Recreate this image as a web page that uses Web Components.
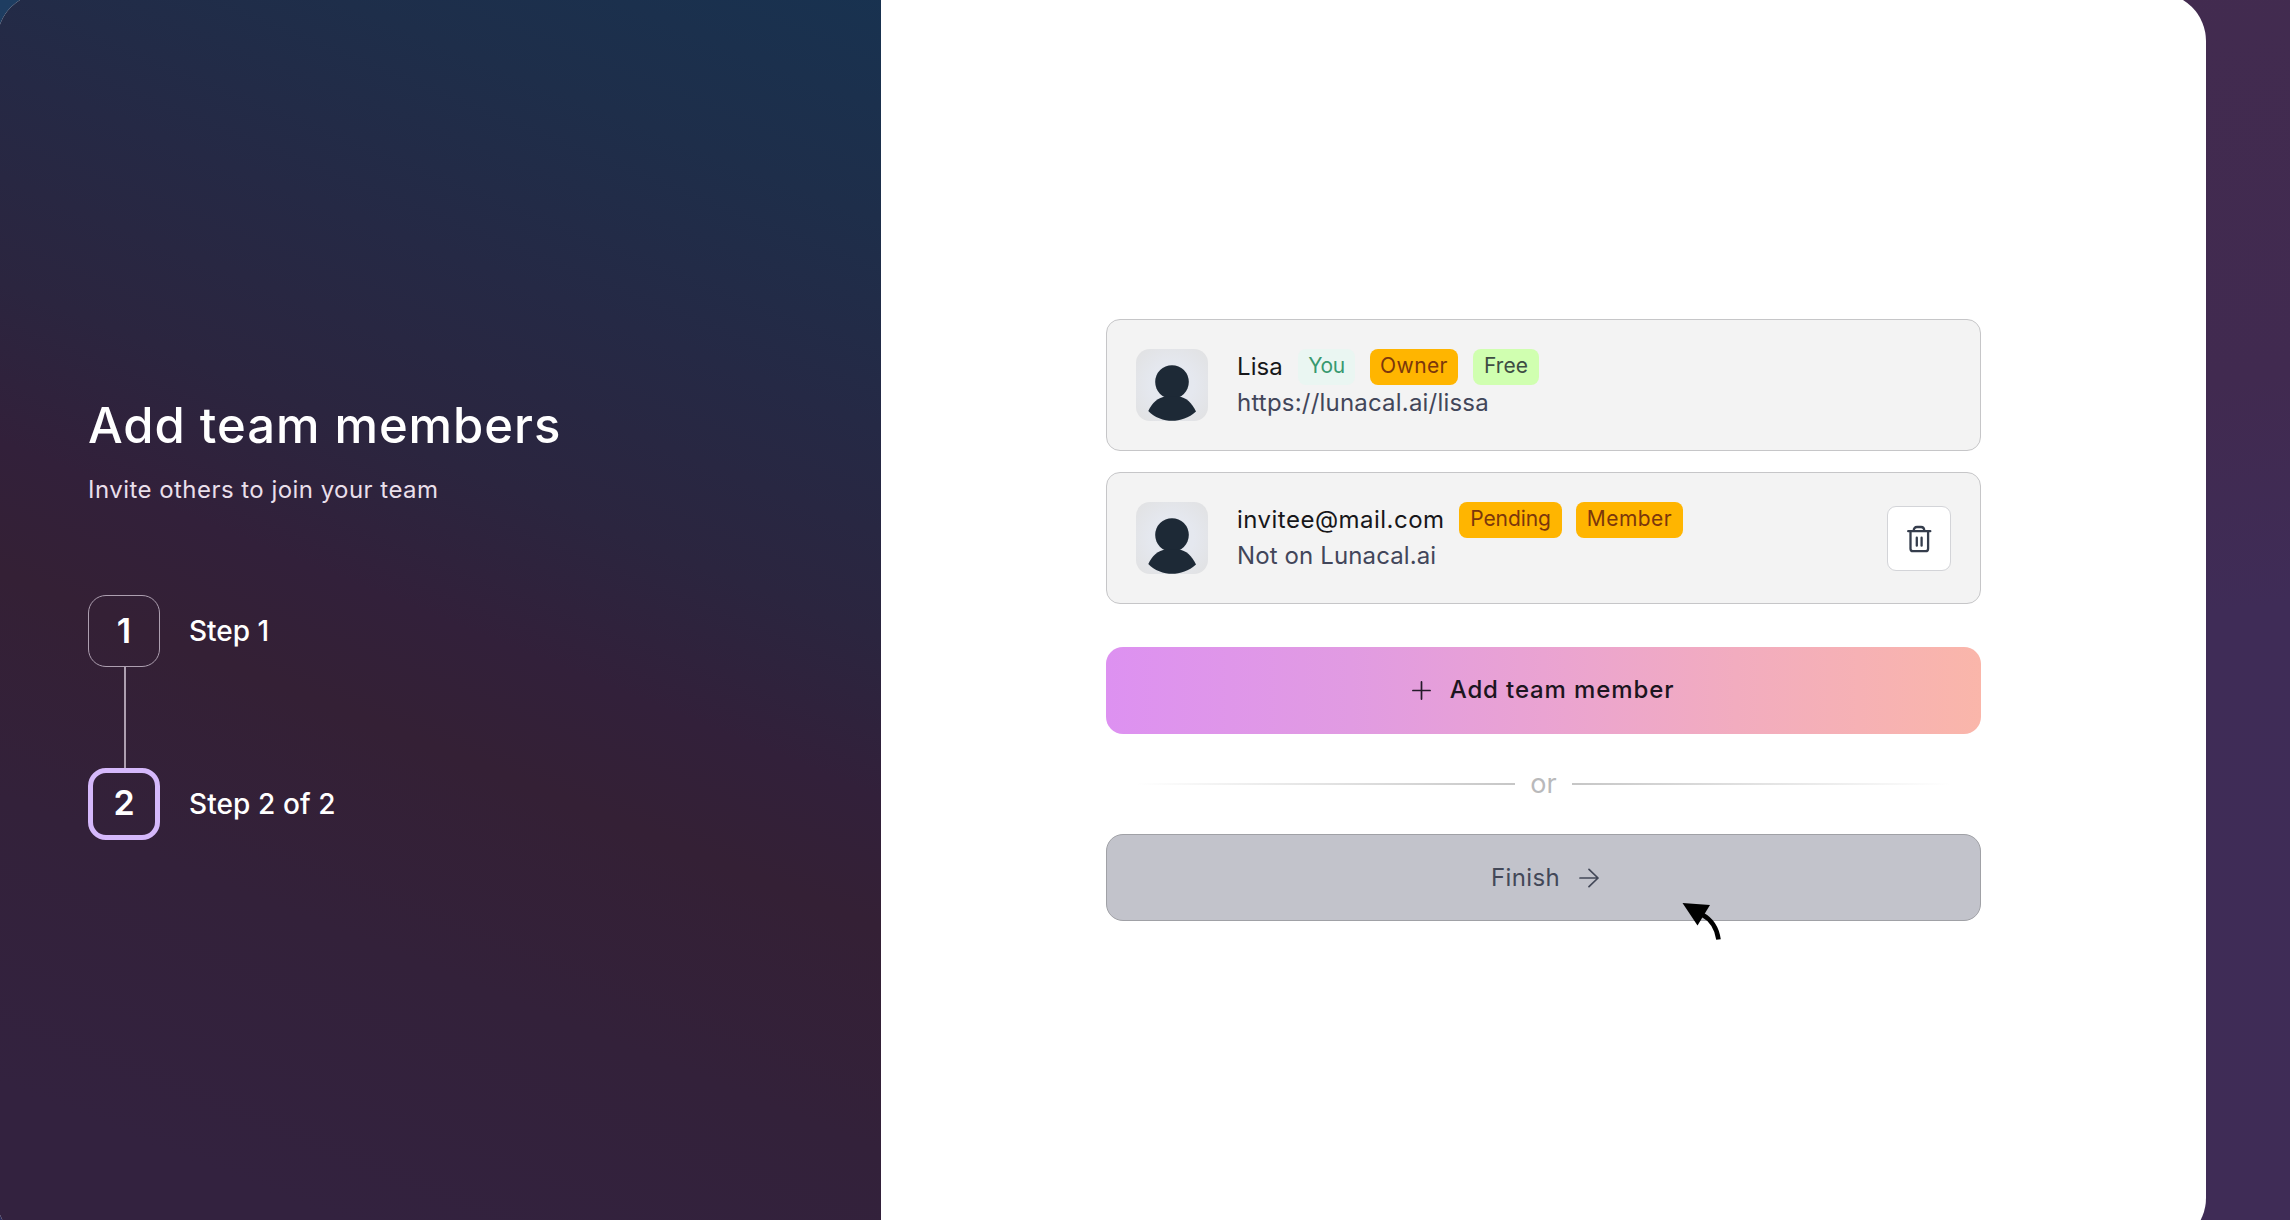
<!DOCTYPE html>
<html lang="en">
<head>
<meta charset="utf-8">
<title>Add team members</title>
<style>
html,body{margin:0;height:1220px;overflow:hidden}
body{font-family:Inter,"Liberation Sans",sans-serif;font-size:24px;
background:linear-gradient(90deg,#1e3d61 0,#1e3d61 40px,transparent 41px) 0 0/100% 600px no-repeat,linear-gradient(90deg,#2c2c5c 0,#2c2c5c 40px,transparent 41px) 0 600px/100% 620px no-repeat,linear-gradient(172deg,#432c4f 0%,#412a50 45%,#3f2c57 60%,#3f2c56 100%)}
</style>
</head>
<body>
<onboarding-shell>
  <side-panel slot="side" heading="Add team members" sub="Invite others to join your team">
    <step-item number="1">Step 1</step-item>
    <step-item number="2" active>Step 2 of 2</step-item>
  </side-panel>
  <member-card style="--name-w:46px;--name-ls:.1px;--detail-ls:.2px">
    <span slot="name">Lisa</span>
    <tag-badge slot="tags" kind="you" style="--w:57px;--ls:-.4px">You</tag-badge>
    <tag-badge slot="tags" style="--w:88px;--ls:.4px">Owner</tag-badge>
    <tag-badge slot="tags" kind="free" style="--w:66px">Free</tag-badge>
    <span slot="detail">https://lunacal.ai/lissa</span>
  </member-card>
  <member-card removable style="--name-w:207px;--name-ls:.48px;--detail-ls:.12px">
    <span slot="name">invitee@mail.com</span>
    <tag-badge slot="tags" style="--w:103px;--ls:-.1px">Pending</tag-badge>
    <tag-badge slot="tags" style="--w:107px;--ls:.45px;margin-left:-1px">Member</tag-badge>
    <span slot="detail">Not on Lunacal.ai</span>
  </member-card>
  <action-button kind="primary">Add team member</action-button>
  <or-divider>or</or-divider>
  <action-button kind="finish">Finish</action-button>
</onboarding-shell>
<script>
function define(name, html, setup) {
  customElements.define(name, class extends HTMLElement {
    constructor() {
      super();
      const root = this.attachShadow({ mode: 'open' });
      const t = document.createElement('template');
      t.innerHTML = html;
      root.append(t.content.cloneNode(true));
    }
    connectedCallback() { if (setup) setup(this, this.shadowRoot); }
  });
}

define('onboarding-shell', `<style>
:host{display:flex;box-sizing:border-box;width:2209px;height:1253px;margin:-7px 0 0 -3px;border-radius:48px;overflow:hidden;background:#fff}
.main{flex:1;display:flex;flex-direction:column;align-items:center}
.col{width:875px;padding-top:326px;display:flex;flex-direction:column}
</style><slot name="side"></slot><div class="main"><div class="col"><slot></slot></div></div>`);

define('side-panel', `<style>
:host{display:block;box-sizing:border-box;width:884px;height:1253px;padding:403px 0 0 91px;color:#fff;
background:linear-gradient(202deg,#183250 0%,#1e2e4a 14%,#252945 27%,#2b253f 40%,#32203a 50%,#342035 58%,#33213a 72%,#33223f 90%)}
h1{margin:0 0 16px;font-size:49px;line-height:60px;font-weight:450;letter-spacing:.95px;white-space:nowrap}
p{margin:0 0 87px;font-size:24px;line-height:36px;letter-spacing:.46px;color:#e9dfea}
.steps{display:flex;flex-direction:column}
</style><h1></h1><p></p><div class="steps"><slot></slot></div>`, (el, r) => {
  r.querySelector('h1').textContent = el.getAttribute('heading');
  r.querySelector('p').textContent = el.getAttribute('sub');
});

define('step-item', `<style>
:host{display:grid;grid-template-columns:72px auto;column-gap:29px;justify-content:start;align-items:center}
.box{box-sizing:border-box;width:72px;height:72px;border:1px solid #ad9fb0;border-radius:18px;display:flex;align-items:center;justify-content:center;font-size:34px;font-weight:600;padding-bottom:1px}
.label{font-size:28px;line-height:40px;font-weight:500;padding-bottom:1px;letter-spacing:0}
.line{width:2px;height:101px;margin-left:36px;background:#ad9fb0}
:host([active]) .box{border:5px solid #d5b8fb;padding-bottom:3px}
:host([active]) .label{letter-spacing:.1px}
:host([active]) .line{display:none}
</style><div class="box"></div><div class="label"><slot></slot></div><div class="line"></div>`, (el, r) => {
  r.querySelector('.box').textContent = el.getAttribute('number');
});

define('member-card', `<style>
:host{box-sizing:border-box;height:132px;display:flex;align-items:flex-start;padding:29px;border:1px solid #c6c6c8;border-radius:14px;background:#f3f3f3;margin-bottom:21px}
:host([removable]){margin-bottom:43px}
.avatar{width:72px;height:72px;display:block;border-radius:14px;flex:none}
.info{margin-left:29px;font-size:24px;line-height:36px}
.row{display:flex;gap:15px;height:36px;white-space:nowrap}
.name{width:var(--name-w);letter-spacing:var(--name-ls);color:#17171a}
.detail{color:#42465a;letter-spacing:var(--detail-ls)}
button{display:none;box-sizing:border-box;width:64px;height:65px;margin:4px 0 0 auto;padding:0;border:1px solid #d3d4d8;border-radius:9px;background:#fff;align-items:center;justify-content:center}
:host([removable]) button{display:flex}
</style>
<svg class="avatar" viewBox="0 0 72 72"><defs><radialGradient id="g" r=".75"><stop offset=".4" stop-color="#e5e8ef"/><stop offset="1" stop-color="#e0e0e0"/></radialGradient></defs><rect width="72" height="72" fill="url(#g)"/><circle cx="36" cy="33" r="16.8" fill="#1d2936"/><path d="M12.3 62C16 54 22 48.500 30 47.300H42.500C50 48.500 56 54 60 62.500C53 69 44 71.800 36 71.800S18 68.500 12.300 62Z" fill="#1d2936"/></svg>
<div class="info"><div class="row"><div class="name"><slot name="name"></slot></div><slot name="tags"></slot></div><div class="detail"><slot name="detail"></slot></div></div>
<button aria-label="Remove"><svg width="26" height="28" viewBox="0 0 26 28" fill="none" stroke="#353d4c" stroke-width="2.300" stroke-linecap="round" stroke-linejoin="round"><path d="M2.200 6.200H24.300M7.700 6C7.700 3.100 8.900 2 11 2h4c2.100 0 3.300 1.100 3.300 4M4.500 6.500V23.700a2.500 2.500 0 0 0 2.500 2.500H19.600a2.500 2.500 0 0 0 2.500-2.500V6.500M10.800 12.700V20.700M15.600 12.700V20.700"/></svg></button>`);

define('tag-badge', `<style>
:host{box-sizing:border-box;width:var(--w);height:36px;display:flex;align-items:center;justify-content:center;padding-bottom:3px;border-radius:8px;font-size:21px;line-height:28px;letter-spacing:var(--ls,0);color:#7b370c;background:#ffb500}
:host([kind=you]){color:#38996f;background:#eaf6f2}
:host([kind=free]){color:#3e4d43;background:#d0ffb0}
</style><slot></slot>`);

define('action-button', `<style>
:host{box-sizing:border-box;height:87px;border-radius:17px;display:flex;align-items:center;justify-content:center;gap:19px;font-size:24px;line-height:36px}
:host([kind=primary]){background:linear-gradient(90deg,#dd91f1 0%,#e19be2 28%,#eaa3d2 50%,#f2acbf 72%,#fab6aa 100%);color:#1c1520;font-weight:450;letter-spacing:.88px;padding-right:1px}
:host([kind=finish]){background:#c2c3cb;border:1px solid #a0a1a6;color:#434858;letter-spacing:.4px;position:relative;padding-left:3px}
svg{display:none;flex:none}
:host([kind=primary]) .plus,:host([kind=finish]) .arrow,:host([kind=finish]) .pointer{display:block}
:host([kind=primary]) span{padding-bottom:1px}
.pointer{position:absolute;left:575px;top:68px}
</style>
<svg class="plus" width="19" height="19" viewBox="0 0 19 19" fill="none" stroke="#241a2a" stroke-width="1.700" stroke-linecap="round"><path d="M9.500 .9V18.100M.9 9.500H18.100"/></svg>
<span><slot></slot></span>
<svg class="arrow" width="20" height="20" viewBox="0 0 20 20" fill="none" stroke="#434858" stroke-width="1.700" stroke-linecap="round" stroke-linejoin="round"><path d="M1 10H19M10 1.300L19 10L10 18.700"/></svg>
<svg class="pointer" width="40" height="40" viewBox="0 0 40 40"><path d="M.5 0L28 2L15.500 22.500Z"/><path d="M20 11.500Q34 19 36.500 36.500" fill="none" stroke="#000" stroke-width="4.600"/></svg>`);

define('or-divider', `<style>
:host{display:flex;height:100px;align-items:center;gap:15px;padding:0 30px;font-size:27px;line-height:36px;color:#b9b9bb}
i{flex:1;height:2px;background:linear-gradient(90deg,transparent,#c6c6c6)}
i:last-child{background:linear-gradient(270deg,transparent,#c6c6c6)}
span{padding-bottom:1px}
</style><i></i><span><slot></slot></span><i></i>`);
</script>
</body>
</html>
